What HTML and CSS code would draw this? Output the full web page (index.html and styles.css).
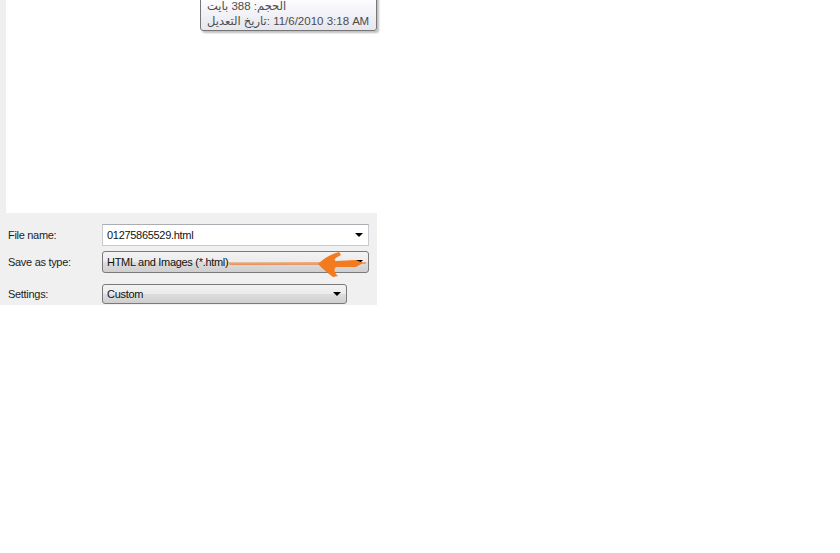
FILE: index.html
```html
<!DOCTYPE html>
<html lang="en">
<head>
  <meta charset="UTF-8">
  <title>Save As</title>
  <link rel="stylesheet" href="styles.css">
</head>
<body>
  <div class="dialog">
    <div class="browser">
      <div class="strip"></div>
      <div class="list">
        <div class="tooltip">
          <div class="tip-line"><bdi dir="rtl">الحجم: 388 بايت</bdi></div>
          <div class="tip-line"><bdi dir="rtl">تاريخ التعديل</bdi>: 11/6/2010 3:18 AM</div>
        </div>
      </div>
    </div>
    <div class="fields">
      <div class="row first">
        <label>File name:</label>
        <div class="combo edit">
          <span>01275865529.html</span>
          <span class="caret"></span>
        </div>
      </div>
      <div class="row second">
        <label>Save as type:</label>
        <div class="combo">
          <span>HTML and Images (*.html)</span>
          <span class="caret"></span>
        </div>
      </div>
      <div class="row third">
        <label>Settings:</label>
        <div class="combo short">
          <span>Custom</span>
          <span class="caret"></span>
        </div>
      </div>
      <!-- hand drawn arrow on the screenshot -->
      <svg class="marker" viewBox="0 213 377 92" width="377" height="92">
        <path d="M228,263.5 L366,263" stroke="#f0a060" stroke-width="2" fill="none"/>
        <path d="M230,264.5 L360,264.5" stroke="#e8783a" stroke-width="1" fill="none" opacity="0.6"/>
        <path d="M318,264 C324,258 331,254 339,252 L341,255 C335,258 333,260 336,261 L356,260 L363,263 L356,267 L336,267 C333,270 335,273 338,276 L333,277 C327,273 322,268 318,264 Z" fill="#f47a20"/>
      </svg>
    </div>
  </div>
</body>
</html>
```

FILE: styles.css
```css
* {
  margin: 0;
  padding: 0;
  box-sizing: border-box;
}

body {
  background: #fff;
  font-family: 'Liberation Sans', Arial, sans-serif;
  color: #1e1e1e;
}

.dialog {
  width: 377px;
  height: 305px;
}

.browser {
  display: flex;
  height: 213px;
}

.strip {
  width: 6px;
  background: #efefef;
}

.list {
  flex: 1;
  background: #fff;
  position: relative;
}

.tooltip {
  position: absolute;
  left: 194px;
  top: -4px;
  width: 177px;
  height: 35px;
  padding: 2px 0 0 6px;
  border: 1px solid #767676;
  border-radius: 0 0 3px 3px;
  background: linear-gradient(#ffffff, #e5e6ef);
  box-shadow: 2px 2px 2px rgba(0, 0, 0, 0.25);
  font-family: 'Liberation Sans', 'DejaVu Sans', sans-serif;
  font-size: 11.5px;
  letter-spacing: -0.3px;
  color: #4c4c4c;
}

.tip-line {
  height: 15px;
  line-height: 15px;
  white-space: nowrap;
}

.fields {
  position: relative;
  height: 92px;
  background: #f0f0f0;
  padding: 11px 8px 0 8px;
}

.row {
  display: flex;
  align-items: center;
  font-size: 11px;
  letter-spacing: -0.3px;
}

.row label {
  width: 94px;
}

.second {
  margin-top: 5px;
}

.third {
  margin-top: 11px;
}

.combo {
  width: 267px;
  height: 22px;
  display: flex;
  align-items: center;
  justify-content: space-between;
  padding: 0 5px 0 4px;
  border: 1px solid #7a7a7a;
  border-radius: 3px;
  background: linear-gradient(#f3f3f3 0%, #ebebeb 50%, #dddddd 51%, #cfcfcf 100%);
  font-size: 11px;
  color: #111;
}

.combo.edit {
  border: 1px solid #c8cad0;
  border-top-color: #abadb3;
  border-radius: 0;
  background: #fff;
}

.combo.short {
  width: 245px;
  height: 20px;
}

.caret {
  width: 0;
  height: 0;
  border-left: 4px solid transparent;
  border-right: 4px solid transparent;
  border-top: 4px solid #000;
}

.marker {
  position: absolute;
  left: 0;
  top: 0;
}
```
